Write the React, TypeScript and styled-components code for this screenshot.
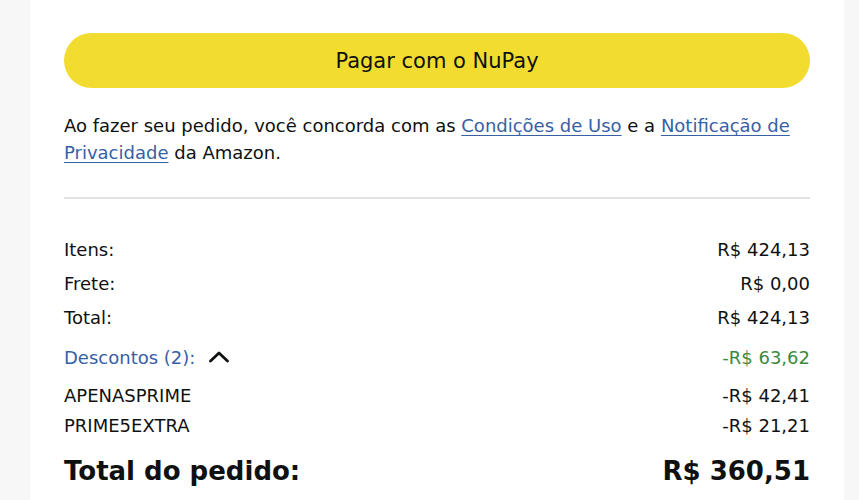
import styled, { createGlobalStyle } from "styled-components";

const GlobalStyle = createGlobalStyle`
  html, body {
    margin: 0;
    padding: 0;
    background: #f7f7f7;
  }
  body {
    font-family: "DejaVu Sans", "Liberation Sans", sans-serif;
    color: #0f1111;
  }
`;

type Line = {
  label: string;
  value: string;
};

const lines: Line[] = [
  { label: "Itens:", value: "R$ 424,13" },
  { label: "Frete:", value: "R$ 0,00" },
  { label: "Total:", value: "R$ 424,13" },
];

const coupons: Line[] = [
  { label: "APENASPRIME", value: "-R$ 42,41" },
  { label: "PRIME5EXTRA", value: "-R$ 21,21" },
];

const Page = styled.div`
  display: flex;
  min-height: 500px;
  padding-left: 30px;
`;

const Panel = styled.div`
  width: 814px;
  background: #ffffff;
  padding: 33px 34px 0;
  box-sizing: border-box;
`;

const PayButton = styled.button`
  display: flex;
  align-items: center;
  justify-content: center;
  width: 100%;
  height: 55px;
  border: none;
  border-radius: 28px;
  background: #f3dc30;
  color: #0f1111;
  font-family: inherit;
  font-size: 21px;
  cursor: pointer;
`;

const Legal = styled.p`
  margin: 24px 0 0;
  font-size: 18px;
  line-height: 27px;
`;

const Link = styled.a`
  color: #3760a5;
  text-decoration: underline;
  text-underline-offset: 3px;
`;

const Divider = styled.hr`
  margin: 31px 0 0;
  border: none;
  border-top: 2px solid #e3e3e3;
`;

const Summary = styled.div`
  display: flex;
  flex-direction: column;
  margin-top: 33px;
`;

const Row = styled.div<{ $h?: number }>`
  display: flex;
  justify-content: space-between;
  align-items: center;
  height: ${(p) => p.$h ?? 34}px;
  font-size: 18px;
`;

const DiscountLabel = styled.span`
  display: flex;
  align-items: center;
  gap: 13px;
  color: #3760a5;
`;

const DiscountValue = styled.span`
  color: #3d8a3f;
`;

const TotalRow = styled.div`
  display: flex;
  justify-content: space-between;
  align-items: center;
  height: 36px;
  margin-top: 13px;
  font-size: 26px;
  font-weight: 700;
`;

const Chevron = () => (
  <svg width="22" height="14" viewBox="0 0 22 14" fill="none">
    <path
      d="M2.5 11 L11 3 L19.5 11"
      stroke="#0f1111"
      strokeWidth="2.8"
      strokeLinecap="round"
      strokeLinejoin="round"
    />
  </svg>
);

export default function App() {
  return (
    <>
      <GlobalStyle />
      <Page>
        <Panel>
          <PayButton>Pagar com o NuPay</PayButton>
          <Legal>
            Ao fazer seu pedido, você concorda com as{" "}
            <Link href="#">Condições de Uso</Link> e a{" "}
            <Link href="#">Notificação de Privacidade</Link> da Amazon.
          </Legal>
          <Divider />
          <Summary>
            {lines.map((l) => (
              <Row key={l.label}>
                <span>{l.label}</span>
                <span>{l.value}</span>
              </Row>
            ))}
            <Row $h={46}>
              <DiscountLabel>
                Descontos (2): <Chevron />
              </DiscountLabel>
              <DiscountValue>-R$ 63,62</DiscountValue>
            </Row>
            {coupons.map((c) => (
              <Row key={c.label} $h={30}>
                <span>{c.label}</span>
                <span>{c.value}</span>
              </Row>
            ))}
          </Summary>
          <TotalRow>
            <span>Total do pedido:</span>
            <span>R$ 360,51</span>
          </TotalRow>
        </Panel>
      </Page>
    </>
  );
}
